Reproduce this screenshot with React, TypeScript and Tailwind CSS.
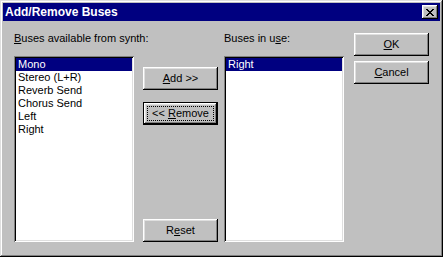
import React from "react"

const raised =
  "shadow-[inset_-1px_-1px_#000000,inset_1px_1px_#ffffff,inset_-2px_-2px_#808080,inset_2px_2px_#dfdfdf]"
const sunken =
  "shadow-[inset_1px_1px_#808080,inset_-1px_-1px_#ffffff,inset_2px_2px_#000000,inset_-2px_-2px_#dfdfdf]"

function Btn({ children, def }: { children: React.ReactNode; def?: boolean }) {
  if (def) {
    return (
      <div className="w-[75px] h-[23px] border border-black bg-[#c0c0c0]">
        <div className={`w-full h-full p-[3px] ${raised}`}>
          <div className="w-full h-full border border-dotted border-black flex items-center justify-center">
            {children}
          </div>
        </div>
      </div>
    )
  }
  return (
    <div className={`w-[75px] h-[23px] bg-[#c0c0c0] flex items-center justify-center ${raised}`}>
      {children}
    </div>
  )
}

function ListBox({ items, selected }: { items: string[]; selected: number }) {
  return (
    <div className={`w-[120px] h-[186px] bg-white p-[2px] ${sunken}`}>
      {items.map((it, i) => (
        <div
          key={it}
          className={`h-[13px] leading-[13px] pl-[2px] ${
            i === selected ? "bg-[#000080] text-white" : "text-black"
          }`}
        >
          {it}
        </div>
      ))}
    </div>
  )
}

export default function App() {
  return (
    <div
      className="w-[443px] h-[257px] bg-[#c0c0c0] p-[3px] flex flex-col text-[11px] text-black shadow-[inset_-1px_-1px_#000000,inset_1px_1px_#dfdfdf,inset_-2px_-2px_#808080,inset_2px_2px_#ffffff]"
      style={{ fontFamily: '"Liberation Sans", Arial, sans-serif' }}
    >
      {/* Title bar */}
      <div className="h-[18px] bg-[#000080] flex items-center justify-between pl-[2px] pr-[2px]">
        <span className="text-white font-bold text-[12px] leading-[14px]">Add/Remove Buses</span>
        <div className={`w-[16px] h-[14px] bg-[#c0c0c0] flex items-center justify-center ${raised}`}>
          <svg width="8" height="7" viewBox="0 0 8 7" shapeRendering="crispEdges">
            <path
              d="M0 0h2v1h-2zM6 0h2v1h-2zM1 1h2v1h-2zM5 1h2v1h-2zM2 2h4v1h-4zM3 3h2v1h-2zM2 4h4v1h-4zM1 5h2v1h-2zM5 5h2v1h-2zM0 6h2v1h-2zM6 6h2v1h-2z"
              fill="#000"
            />
          </svg>
        </div>
      </div>

      {/* Client */}
      <div className="flex flex-row items-start pl-[11px]">
        <div className="flex flex-col w-[120px] shrink-0 pt-[11px]">
          <div className="h-[13px] leading-[13px] mb-[11px] whitespace-nowrap">
            <u>B</u>uses available from synth:
          </div>
          <ListBox
            items={["Mono", "Stereo (L+R)", "Reverb Send", "Chorus Send", "Left", "Right"]}
            selected={0}
          />
        </div>

        <div className="flex flex-col shrink-0 ml-[9px] pt-[46px]">
          <Btn>
            <span>
              <u>A</u>dd &gt;&gt;
            </span>
          </Btn>
          <div className="mt-[12px]">
            <Btn def>
              <span>
                &lt;&lt; <u>R</u>emove
              </span>
            </Btn>
          </div>
          <div className="mt-[94px]">
            <Btn>
              <span>
                R<u>e</u>set
              </span>
            </Btn>
          </div>
        </div>

        <div className="flex flex-col w-[120px] shrink-0 ml-[6px] pt-[11px]">
          <div className="h-[13px] leading-[13px] mb-[11px] whitespace-nowrap">
            Buses in u<u>s</u>e:
          </div>
          <ListBox items={["Right"]} selected={0} />
        </div>

        <div className="flex flex-col shrink-0 ml-[10px] pt-[12px] gap-[5px]">
          <Btn>
            <span>
              <u>O</u>K
            </span>
          </Btn>
          <Btn>
            <span>
              <u>C</u>ancel
            </span>
          </Btn>
        </div>
      </div>
    </div>
  )
}
